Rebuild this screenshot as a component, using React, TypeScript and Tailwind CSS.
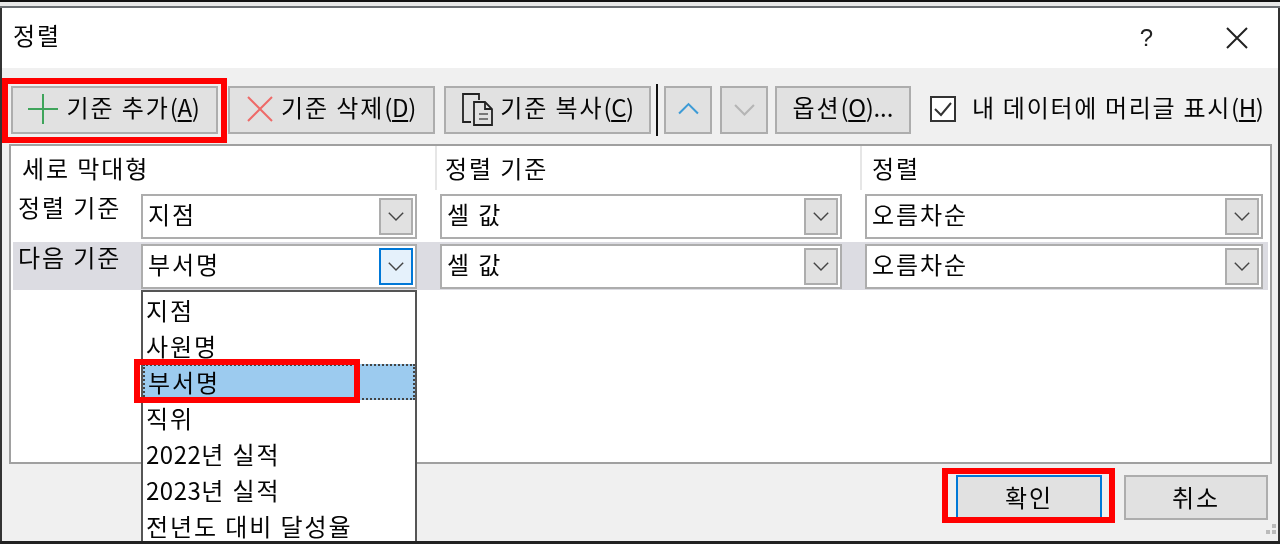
import React from "react";

const font = { fontFamily: '"Noto Sans CJK KR", "Noto Sans", sans-serif' };

function Chevron({ up = false, color = "#444", size = 18, width = 1.6 }: { up?: boolean; color?: string; size?: number; width?: number }) {
  return (
    <svg width={size} height={size * 0.6} viewBox="0 0 20 12" fill="none">
      <path d={up ? "M1 11 L10 2 L19 11" : "M1 1 L10 10 L19 1"} stroke={color} strokeWidth={width * 1.1} />
    </svg>
  );
}

function Key({ k }: { k: string }) {
  return (
    <span className="tracking-[-0.4px]">
      (<span className="underline underline-offset-[3px] decoration-[1.5px]">{k}</span>)
    </span>
  );
}

function Btn({ className, children }: { className: string; children: React.ReactNode }) {
  return (
    <div className={`h-[48px] shrink-0 flex items-center justify-center bg-[#e1e1e1] border-2 border-[#adadad] text-[24px] tracking-[1.9px] text-[#050505] ${className}`}>
      {children}
    </div>
  );
}

function Combo({ text, w, active = false }: { text: string; w: string; active?: boolean }) {
  return (
    <div className={`h-[45px] shrink-0 ${w} bg-white border-2 border-[#adadad] flex items-center justify-between pl-[5px] pr-[2px] text-[24px] tracking-[1.9px] text-[#050505]`}>
      <span className="leading-none pb-[6px]">{text}</span>
      <div className={`w-[34px] h-[37px] flex items-center justify-center border-2 ${active ? "border-[#0078d7] bg-[#e5f1fb]" : "border-[#adadad] bg-[#e1e1e1]"}`}>
        <Chevron size={16} />
      </div>
    </div>
  );
}

function Row({ label, a, b, c, active = false }: { label: string; a: string; b: string; c: string; active?: boolean }) {
  return (
    <div className={`flex items-start pl-[4px] pr-[5px] pt-[2px] ${active ? "h-[48px] bg-[#dcdce2]" : "h-[50px]"}`}>
      <div className="w-[124px] shrink-0 pl-[1px] text-[24px] text-[#050505] leading-[26px] tracking-[1.9px] whitespace-nowrap">{label}</div>
      <Combo text={a} w="w-[276px]" active={active} />
      <div className="w-[23px] shrink-0" />
      <Combo text={b} w="w-[402px]" />
      <div className="w-[23px] shrink-0" />
      <Combo text={c} w="w-[398px]" />
    </div>
  );
}

const items: [string, string][] = [
  ["", "지점"],
  ["", "사원명"],
  ["", "부서명"],
  ["", "직위"],
  ["2022", "년 실적"],
  ["2023", "년 실적"],
  ["", "전년도 대비 달성율"],
];

export default function App() {
  return (
    <div style={font} className="relative w-[1280px] h-[544px] overflow-hidden bg-[#f0f0f0] flex flex-col border-b-[3px] border-b-[#222] blur-[0.4px]">
      {/* sheet strip above the dialog */}
      <div className="h-[8px] shrink-0 bg-[#e8e8e8] border-t-[2px] border-t-[#111] border-b-[2px] border-b-[#6b6f73]" />
      <div className="flex-1 flex flex-col min-h-0 border-l-[2px] border-l-[#333] border-r-[2px] border-r-[#333]">
        {/* title */}
        <div className="h-[60px] shrink-0 bg-white flex items-center justify-between pl-[11px] pr-[29px]">
          <span className="text-[24px] tracking-[1.9px] text-[#050505] leading-none pb-[6px]">정렬</span>
          <div className="flex items-center gap-[72px]">
            <span className="text-[24px] text-[#222] leading-none font-medium" style={{ fontFamily: '"Liberation Sans", sans-serif' }}>?</span>
            <svg width="24" height="24" viewBox="0 0 24 24" fill="none">
              <path d="M2 2 L22 22 M22 2 L2 22" stroke="#222" strokeWidth="2" />
            </svg>
          </div>
        </div>

        {/* toolbar */}
        <div className="h-[76px] shrink-0 flex items-center pl-[9px] pt-[8px]">
          <Btn className="w-[207px] gap-[9px] pr-[2px]">
            <svg className="mb-[3px]" width="30" height="30" viewBox="0 0 30 30" fill="none">
              <path d="M15 0 V30 M0 15 H30" stroke="#3fa45b" strokeWidth="2" />
            </svg>
            <span className="pb-[6px]">기준 추가<Key k="A" /></span>
          </Btn>
          <Btn className="w-[207px] ml-[10px] gap-[8px]">
            <svg className="mb-[2px]" width="26" height="26" viewBox="0 0 26 26" fill="none">
              <path d="M1 1 L25 25 M25 1 L1 25" stroke="#ee6a68" strokeWidth="2" />
            </svg>
            <span className="pb-[6px]">기준 삭제<Key k="D" /></span>
          </Btn>
          <Btn className="w-[207px] ml-[9px] gap-[6px]">
            <svg className="mb-[2px]" width="33" height="34" viewBox="0 0 33 34" fill="none" stroke="#222" strokeWidth="1.8">
              <path d="M10 30 H2 V2 H18 V8" />
              <path d="M13 10 H24 L31 17 V33 H13 Z" fill="#e1e1e1" />
              <path d="M24 10 V17 H31" />
              <path d="M18 22 H27 M18 27 H27" strokeWidth="1.3" stroke="#555" />
            </svg>
            <span className="pb-[6px]">기준 복사<Key k="C" /></span>
          </Btn>
          <div className="w-[2px] h-[52px] bg-[#111] ml-[5px]" />
          <Btn className="w-[48px] ml-[6px]"><span className="mb-[3px]"><Chevron up color="#3d9bd6" size={21} width={1.8} /></span></Btn>
          <Btn className="w-[48px] ml-[8px]"><Chevron color="#b5b5b5" size={21} width={1.8} /></Btn>
          <Btn className="w-[136px] ml-[7px]"><span className="pb-[6px]">옵션<Key k="O" /><span className="tracking-normal">...</span></span></Btn>
          <div className="w-[26px] h-[26px] ml-[19px] mb-[3px] shrink-0 border-2 border-[#333] bg-white flex items-center justify-center">
            <svg width="18" height="16" viewBox="0 0 18 16" fill="none">
              <path d="M1 8 L7 14 L17 2" stroke="#333" strokeWidth="2" />
            </svg>
          </div>
          <span className="ml-[16px] pb-[6px] text-[24px] text-[#050505] whitespace-nowrap tracking-[1.7px]">내 데이터에 머리글 표시<Key k="H" /></span>
        </div>

        {/* list panel */}
        <div className="h-[320px] shrink-0 ml-[7px] mr-[6px] bg-white border-2 border-[#a0a0a0] flex flex-col pl-[2px] pr-[2px]">
          <div className="h-[46px] shrink-0 flex items-start text-[24px] text-[#050505] tracking-[1.9px]">
            <div className="w-[424px] h-[44px] pl-[9px] flex items-center border-r-2 border-r-[#e6e6e6] leading-none">세로 막대형</div>
            <div className="w-[425px] h-[44px] pl-[8px] flex items-center border-r-2 border-r-[#e6e6e6] leading-none">정렬 기준</div>
            <div className="flex-1 h-[44px] pl-[10px] flex items-center leading-none">정렬</div>
          </div>
          <Row label="정렬 기준" a="지점" b="셀 값" c="오름차순" />
          <Row label="다음 기준" a="부서명" b="셀 값" c="오름차순" active />
        </div>

        {/* footer */}
        <div className="flex-1 flex items-start justify-end pt-[11px] pr-[10px] gap-[22px]">
          <div className="h-[45px] w-[146px] pb-[2px] flex items-center justify-center bg-[#e1e1e1] border-2 border-[#0078d7] text-[24px] tracking-[1.9px] text-[#050505]">확인</div>
          <div className="h-[45px] w-[144px] pb-[2px] flex items-center justify-center bg-[#e1e1e1] border-2 border-[#adadad] text-[24px] tracking-[1.9px] text-[#050505]">취소</div>
        </div>
      </div>

      {/* size grip */}
      <div className="absolute right-[4px] bottom-[7px] w-[10px] h-[10px] grid grid-cols-2 gap-[2px]">
        <span /><span className="bg-[#bbb]" /><span className="bg-[#bbb]" /><span className="bg-[#bbb]" />
      </div>

      {/* dropdown list */}
      <div className="absolute left-[141px] top-[290px] w-[276px] h-[254px] bg-white border-2 border-[#555] border-b-0 text-[24px] tracking-[1.9px] text-[#050505] overflow-hidden">
        {items.map(([num, t]) => (
          <div
            key={num + t}
            className={`h-[36px] pl-[3px] flex items-center whitespace-nowrap leading-none ${t === "부서명" ? "bg-[#9ccbef] border-2 border-dotted border-[#444] pl-[1px]" : ""}`}
          >
            <span className="whitespace-pre"><span className="tracking-[0.5px]">{num}</span>{t}</span>
          </div>
        ))}
      </div>

      {/* red annotation boxes */}
      <div className="absolute left-[2px] top-[78px] w-[225px] h-[65px] border-[6px] border-[#ff0000]" />
      <div className="absolute left-[134px] top-[359px] w-[226px] h-[44px] border-[6px] border-[#ff0000]" />
      <div className="absolute left-[942px] top-[468px] w-[173px] h-[55px] border-[6px] border-[#ff0000]" />
    </div>
  );
}
